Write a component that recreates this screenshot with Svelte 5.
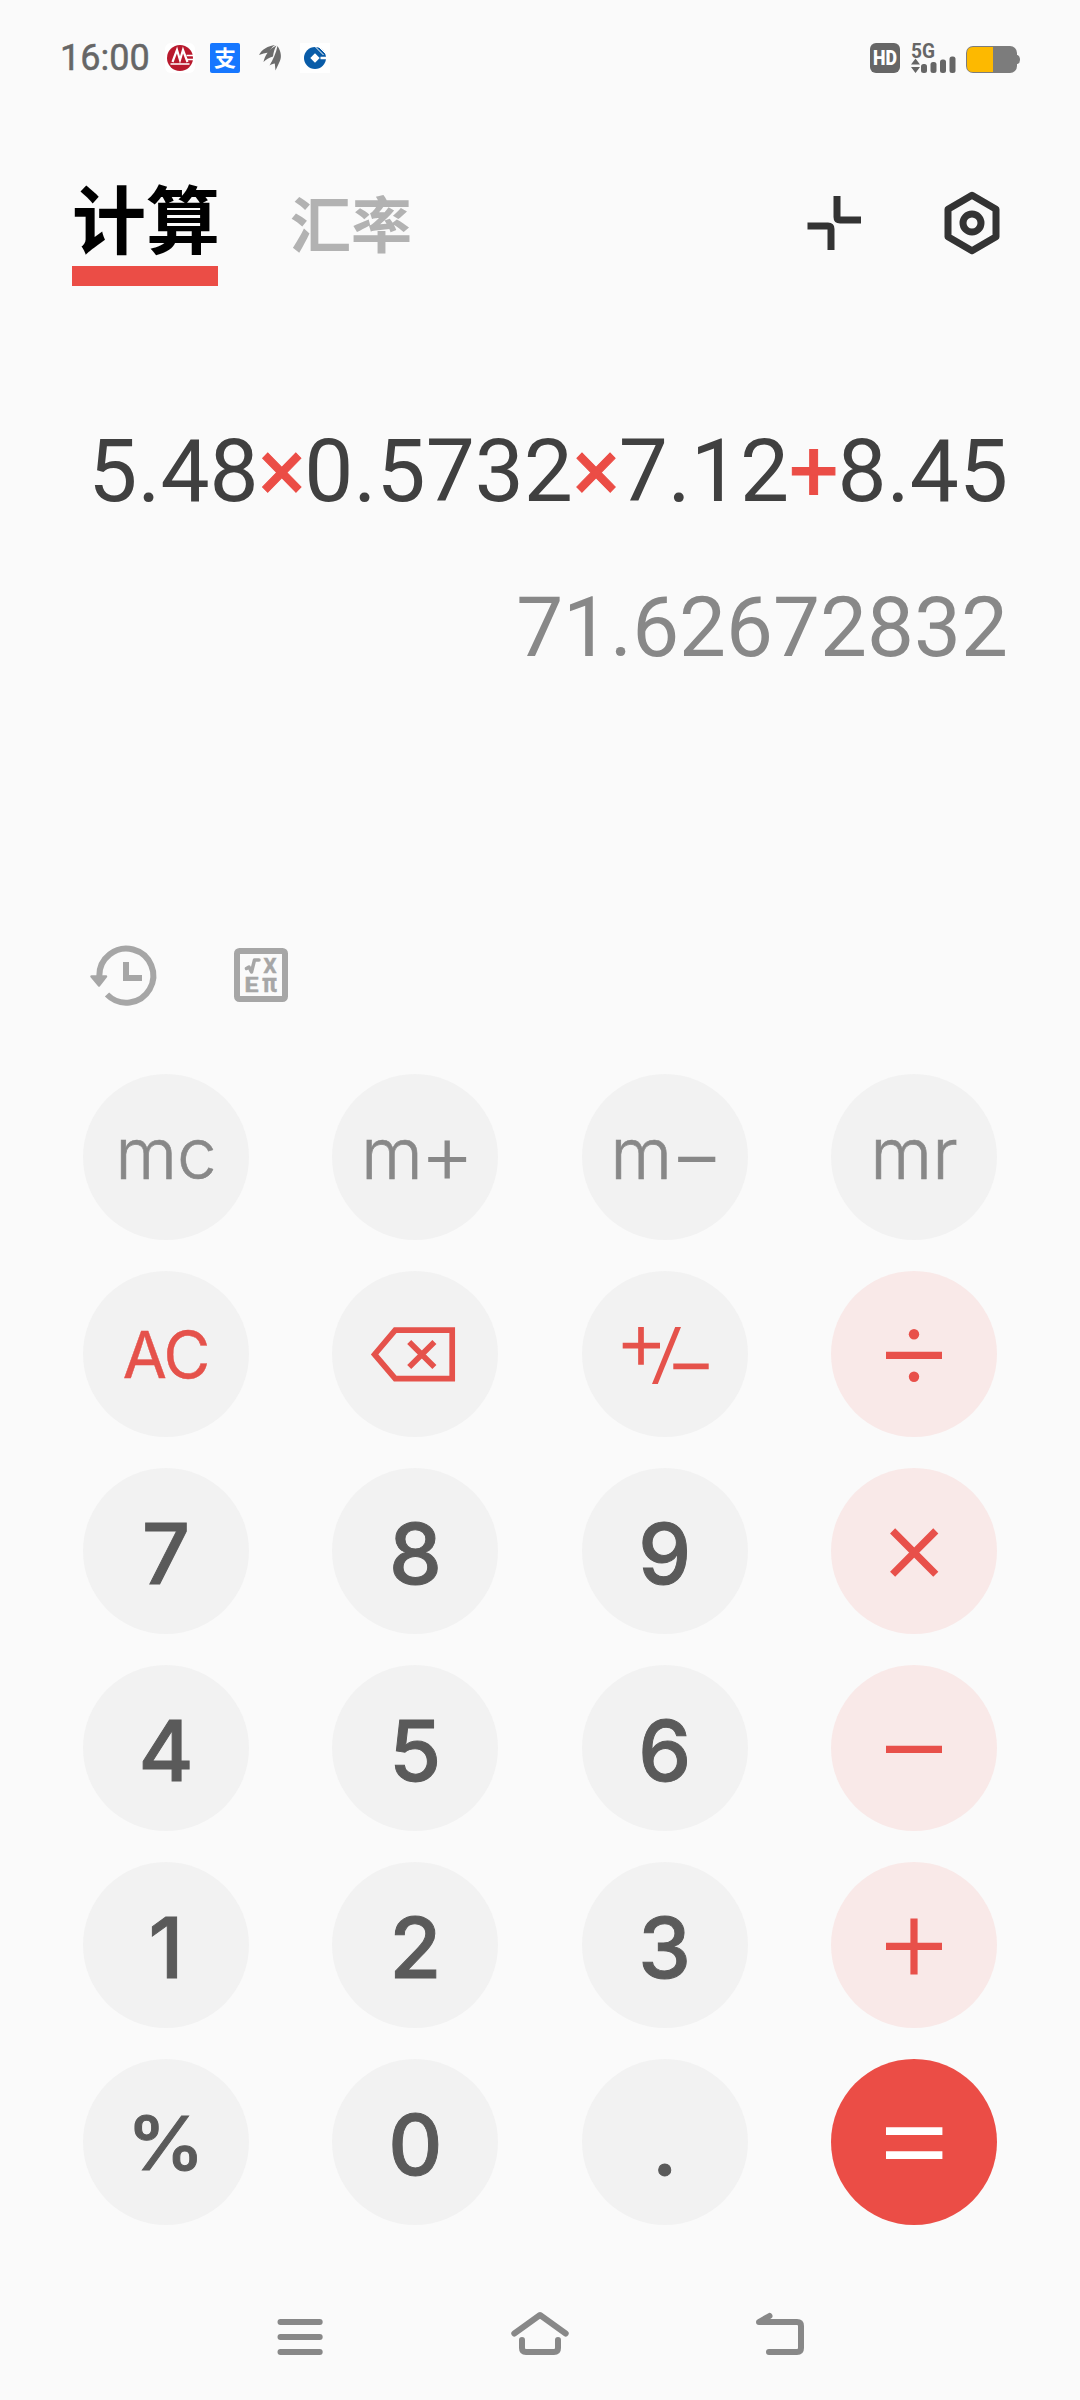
<script lang="ts">
  interface Key {
    id: string;
    kind: 'memory' | 'clear' | 'digit' | 'percent' | 'edit' | 'operator' | 'equals';
    label?: string;
    sign?: string;
  }

  const keys: Key[] = [
    { id: 'mc', kind: 'memory', label: 'mc' },
    { id: 'm+', kind: 'memory', label: 'm', sign: '+' },
    { id: 'm-', kind: 'memory', label: 'm', sign: '−' },
    { id: 'mr', kind: 'memory', label: 'mr' },
    { id: 'ac', kind: 'clear', label: 'AC' },
    { id: 'backspace', kind: 'edit' },
    { id: 'negate', kind: 'edit' },
    { id: 'divide', kind: 'operator' },
    { id: '7', kind: 'digit', label: '7' },
    { id: '8', kind: 'digit', label: '8' },
    { id: '9', kind: 'digit', label: '9' },
    { id: 'multiply', kind: 'operator' },
    { id: '4', kind: 'digit', label: '4' },
    { id: '5', kind: 'digit', label: '5' },
    { id: '6', kind: 'digit', label: '6' },
    { id: 'minus', kind: 'operator' },
    { id: '1', kind: 'digit', label: '1' },
    { id: '2', kind: 'digit', label: '2' },
    { id: '3', kind: 'digit', label: '3' },
    { id: 'plus', kind: 'operator' },
    { id: '%', kind: 'percent', label: '%' },
    { id: '0', kind: 'digit', label: '0' },
    { id: '.', kind: 'digit', label: '.' },
    { id: 'equals', kind: 'equals' }
  ];

  // all symbols share the 166x166 box of the round key
  const symbols: Record<string, string> = {
    backspace: 'M63.2 59.2H120.2V107.7H63.2L42.6 83.4ZM77.2 70.9L102.4 96.1M102.4 70.9L77.2 96.1',
    negate: 'M40.7 74.7H78M59 56V93.7M91.3 95.3H126.7',
    divide: 'M55 84.4H111',
    multiply: 'M61.6 62.9L104.8 106.3M104.8 62.9L61.6 106.3',
    minus: 'M55 84.4H111',
    plus: 'M55 84.4H111M83 56.4V112.6',
    equals: 'M55 72.2H111.4M55 96.2H111.4'
  };

  const expression: string[] = ['5.48', '×', '0.5732', '×', '7.12', '+', '8.45'];
  const result = '71.62672832';

  function isOperator(part: string) {
    return part === '×' || part === '+';
  }
</script>

<div class="screen">
  <div class="status-bar">
    <div class="status-left">
      <span class="time">16:00</span>
      <svg width="30" height="30" viewBox="0 0 30 30">
        <rect width="30" height="30" rx="6" fill="#fff" />
        <circle cx="15" cy="15" r="13" fill="#b8192d" />
        <path d="M7.500 19L12 7L15 17L18 7L22.500 19" fill="none" stroke="#fff" stroke-width="2.2" />
        <path d="M5.500 21H24.500M21.500 12.500H29M22 16.500H29" stroke="#fff" stroke-width="1.500" />
      </svg>
      <svg class="pay" width="30" height="30" viewBox="0 0 30 30">
        <rect width="30" height="30" rx="2" fill="#1677ff" />
        <text x="15" y="22.500" text-anchor="middle" font-size="22" font-weight="700" fill="#fff">支</text>
      </svg>
      <svg class="wing" width="22" height="26" viewBox="0 0 22 26">
        <path
          fill="#6c6c6c"
          d="M0 10C3 4 9 1 16 0C13 2 11 4.500 9.500 7.500C6 8 3 9 0 10ZM4.500 17C6 10 10 4 17.500 .500C15.500 4 14.500 7 14 11.500C10 12.500 7 14.500 4.500 17ZM10.500 20.500C14 15 17 8 18.500 1C22.500 7 23 13 20 18L16.500 25.500L15.800 18.500C14 18.500 12 19.500 10.500 20.500Z"
        />
      </svg>
      <svg class="bank" width="30" height="30" viewBox="0 0 30 30">
        <rect width="30" height="30" fill="#fff" />
        <circle cx="15" cy="15" r="11" fill="#0a5ca8" />
        <path d="M15 10.300L19.700 15L15 19.700L10.300 15Z" fill="#fff" />
        <path d="M20.500 15H28" stroke="#fff" stroke-width="2.500" />
        <path d="M15.500 4L23.500 12M19 4L26 11" stroke="#fff" stroke-width="1" />
      </svg>
    </div>
    <div class="status-right">
      <svg width="30" height="30" viewBox="0 0 30 30">
        <rect width="30" height="30" rx="6" fill="#666" />
        <text x="3" y="22" font-size="19.500" font-weight="900" textLength="24" lengthAdjust="spacingAndGlyphs" fill="#fff">HD</text>
      </svg>
      <svg width="46" height="30" viewBox="0 0 46 30">
        <text x="0" y="15" font-size="21" font-weight="700" textLength="24" lengthAdjust="spacingAndGlyphs" fill="#666">5G</text>
        <path d="M0 21.500L4.500 15.500L9 21.500ZM0 24L4.500 30L9 24Z" fill="#666" />
        <rect x="10" y="21" width="6" height="9" rx="2.500" fill="#666" />
        <rect x="19.500" y="19" width="6" height="11" rx="2.500" fill="#666" />
        <rect x="29" y="16.500" width="6" height="13.500" rx="2.500" fill="#666" />
        <rect x="38.500" y="13.500" width="6" height="16.500" rx="2.500" fill="#666" />
      </svg>
      <svg class="battery" width="54" height="28" viewBox="0 0 54 28">
        <path d="M50 9H51.500Q54 10 54 14Q54 17 51.500 18H50Z" fill="#7c7c7c" />
        <rect x="0" y="0" width="51" height="27" rx="7" fill="#7c7c7c" />
        <path d="M27 1H7Q1 1 1 7V20Q1 26 7 26H27Z" fill="#fdb900" />
      </svg>
    </div>
  </div>

  <header class="header">
    <nav class="tabs">
      <span class="tab active">计算</span>
      <span class="tab">汇率</span>
    </nav>
    <div class="actions">
      <svg width="54" height="54" viewBox="0 0 54 54" fill="none" stroke="#333" stroke-width="7">
        <path d="M0.500 30H21Q24 30 24 33V54" />
        <path d="M30 0V21Q30 24 33 24H54" />
      </svg>
      <svg width="56" height="64" viewBox="0 0 56 64" fill="none" stroke="#333" stroke-width="7">
        <path d="M28 4.300L52 18.300V45.700L28 59.700L4 45.700V18.300Z" stroke-linejoin="round" />
        <circle cx="28" cy="32" r="9" />
      </svg>
    </div>
  </header>

  <section class="display">
    <div class="expression">
      {#each expression as part}<span class:sign={isOperator(part)}>{part}</span>{/each}
    </div>
    <div class="result">{result}</div>
  </section>

  <div class="tools">
    <svg width="66" height="60" viewBox="0 0 66 60">
      <path d="M9.300 31A27 27 0 1 1 17 49.500" fill="none" stroke="#a6a6a6" stroke-width="6" />
      <path d="M1.500 31.500H16L9 40.500Z" fill="#a6a6a6" stroke="#a6a6a6" stroke-width="2.500" stroke-linejoin="round" />
      <path d="M36 20V33H49" fill="none" stroke="#a6a6a6" stroke-width="6" stroke-linecap="square" />
    </svg>
    <svg class="formula" width="54" height="54" viewBox="0 0 54 54">
      <rect x="3" y="3" width="48" height="48" rx="2.500" fill="none" stroke="#a6a6a6" stroke-width="6" />
      <path d="M12.500 20.500L15 19L17.500 24L20.500 12H25" fill="none" stroke="#a6a6a6" stroke-width="3.500" stroke-linejoin="round" stroke-linecap="round" />
      <text x="29.500" y="25" textLength="13" lengthAdjust="spacingAndGlyphs">X</text>
      <text x="10.500" y="44" textLength="14" lengthAdjust="spacingAndGlyphs">E</text>
      <text x="28" y="44" textLength="15" lengthAdjust="spacingAndGlyphs" class="pi">π</text>
    </svg>
  </div>

  <div class="keypad">
    {#each keys as key (key.id)}
      <button class="key {key.kind}" aria-label={key.id}>
        {#if key.label}
          <span>{key.label}</span>
          {#if key.sign}<span class="memory-sign">{key.sign}</span>{/if}
        {:else}
          <svg width="166" height="166" viewBox="0 0 166 166" fill="none">
            <path d={symbols[key.id]} />
            {#if key.id === 'negate'}
              <polygon points="70,113 75.8,113 99,56 93.2,56" />
            {:else if key.id === 'divide'}
              <circle cx="83" cy="63.200" r="5.200" />
              <circle cx="83" cy="105.700" r="5.200" />
            {/if}
          </svg>
        {/if}
      </button>
    {/each}
  </div>

  <div class="nav-bar">
    <svg width="60" height="48" viewBox="0 0 60 48">
      <path d="M10.500 12H49.700M10.500 27H49.700M10.500 42H49.700" />
    </svg>
    <svg width="60" height="48" viewBox="0 0 60 48">
      <path d="M4.300 23.500L30 5L55.700 23.500M12 30V38Q12 42 16 42H44Q48 42 48 38V30" />
    </svg>
    <svg width="60" height="48" viewBox="0 0 60 48">
      <path d="M19 42H47Q51 42 51 38V16Q51 12 47 12H9L19.500 6" />
    </svg>
  </div>
</div>

<style>
  :global(body) {
    background: #fafafa;
  }

  .screen {
    width: 1080px;
    height: 2400px;
    box-sizing: border-box;
    display: flex;
    flex-direction: column;
    background: #fafafa;
    overflow: hidden;
    font-family: Roboto, 'Noto Sans CJK SC', sans-serif;
  }

  svg {
    display: block;
    flex: none;
    overflow: visible;
  }

  .status-bar {
    height: 116px;
    box-sizing: border-box;
    padding: 0 60px;
    display: flex;
    justify-content: space-between;
    align-items: center;
  }

  .status-left,
  .status-right {
    display: flex;
    align-items: center;
  }

  .time {
    width: 105px;
    font-size: 36px;
    font-weight: 400;
    line-height: 42px;
    color: #666;
    -webkit-text-stroke: 0.5px #666;
  }

  .pay {
    margin-left: 15px;
    font-family: 'Noto Sans CJK SC', sans-serif;
  }

  .wing {
    margin-left: 19px;
  }

  .bank {
    margin-left: 19px;
  }

  .status-right {
    gap: 11px;
    font-family: Roboto, sans-serif;
  }

  .battery {
    margin-left: -2px;
    margin-top: 3px;
  }

  .header {
    height: 170px;
    box-sizing: border-box;
    padding: 0 80px 0 72px;
    display: flex;
    justify-content: space-between;
    align-items: flex-end;
  }

  .tabs {
    display: flex;
    align-items: flex-end;
    gap: 72px;
    font-family: 'Noto Sans CJK SC', sans-serif;
    font-weight: 700;
  }

  .tab {
    font-size: 61px;
    line-height: 128px;
    color: #b2b2b2;
  }

  .tab.active {
    width: 146px;
    font-size: 74px;
    line-height: 100px;
    white-space: nowrap;
    color: #000;
    border-bottom: 20px solid #eb4d46;
  }

  .actions {
    height: 126px;
    display: flex;
    align-items: center;
    gap: 83px;
  }

  .display {
    height: 659px;
    box-sizing: border-box;
    padding: 133px 72px 0 0;
    display: flex;
    flex-direction: column;
    align-items: flex-end;
    gap: 54px;
  }

  .expression {
    font-size: 87.4px;
    line-height: 104px;
    color: #404040;
    white-space: nowrap;
  }

  .expression .sign {
    letter-spacing: -1px;
    color: #eb4d46;
    -webkit-text-stroke: 1px #eb4d46;
  }

  .result {
    font-size: 83.6px;
    line-height: 100px;
    color: #888;
  }

  .tools {
    height: 60px;
    padding-left: 90px;
    display: flex;
    align-items: center;
    gap: 78px;
  }

  .formula text {
    font-family: Roboto, sans-serif;
    font-size: 20.5px;
    font-weight: 700;
    fill: #a6a6a6;
    stroke: #a6a6a6;
    stroke-width: 0.5px;
  }

  .formula .pi {
    font-size: 26px;
  }

  .keypad {
    margin-top: 69px;
    padding: 0 83px;
    display: grid;
    grid-template-columns: repeat(4, 166px);
    justify-content: space-between;
    row-gap: 31px;
  }

  .key {
    height: 166px;
    box-sizing: border-box;
    padding: 0;
    border: none;
    border-radius: 50%;
    display: flex;
    justify-content: center;
    align-items: center;
    background: #f2f2f2;
    font-family: Inter, sans-serif;
    color: #5a5a5a;
    line-height: 1;
  }

  .memory {
    padding-bottom: 8px;
    font-size: 71px;
    font-weight: 300;
    color: #888;
    -webkit-text-stroke: 0.6px #888;
  }

  .memory-sign {
    margin: 0 -5px 0 -3px;
    font-size: 84px;
    -webkit-text-stroke: 0;
  }

  .clear {
    padding-top: 2px;
    font-size: 64px;
    font-weight: 400;
    letter-spacing: -1px;
    color: #e5524b;
    -webkit-text-stroke: 0.4px #e5524b;
  }

  .digit {
    padding-top: 6px;
    font-size: 84px;
    font-weight: 500;
    -webkit-text-stroke: 1px #5a5a5a;
  }

  .percent {
    padding-top: 2px;
    font-size: 74px;
    font-weight: 500;
    -webkit-text-stroke: 1px #5a5a5a;
  }

  .percent span {
    transform: scaleX(1.06);
  }

  .edit svg {
    stroke: #e5524b;
    stroke-width: 5.7px;
  }

  .edit polygon {
    fill: #e5524b;
    stroke: none;
  }

  .operator {
    background: #f9e9e8;
  }

  .operator svg {
    stroke: #e8504a;
    stroke-width: 7.2px;
  }

  .operator circle {
    fill: #e8504a;
    stroke: none;
  }

  .equals {
    background: #eb4d46;
  }

  .equals svg {
    stroke: #fff;
    stroke-width: 7.7px;
  }

  .nav-bar {
    margin-top: 85px;
    padding: 0 180px;
    display: grid;
    grid-template-columns: repeat(3, 240px);
    justify-items: center;
  }

  .nav-bar svg {
    fill: none;
    stroke: #888;
    stroke-width: 6px;
    stroke-linecap: round;
    stroke-linejoin: round;
  }
</style>
